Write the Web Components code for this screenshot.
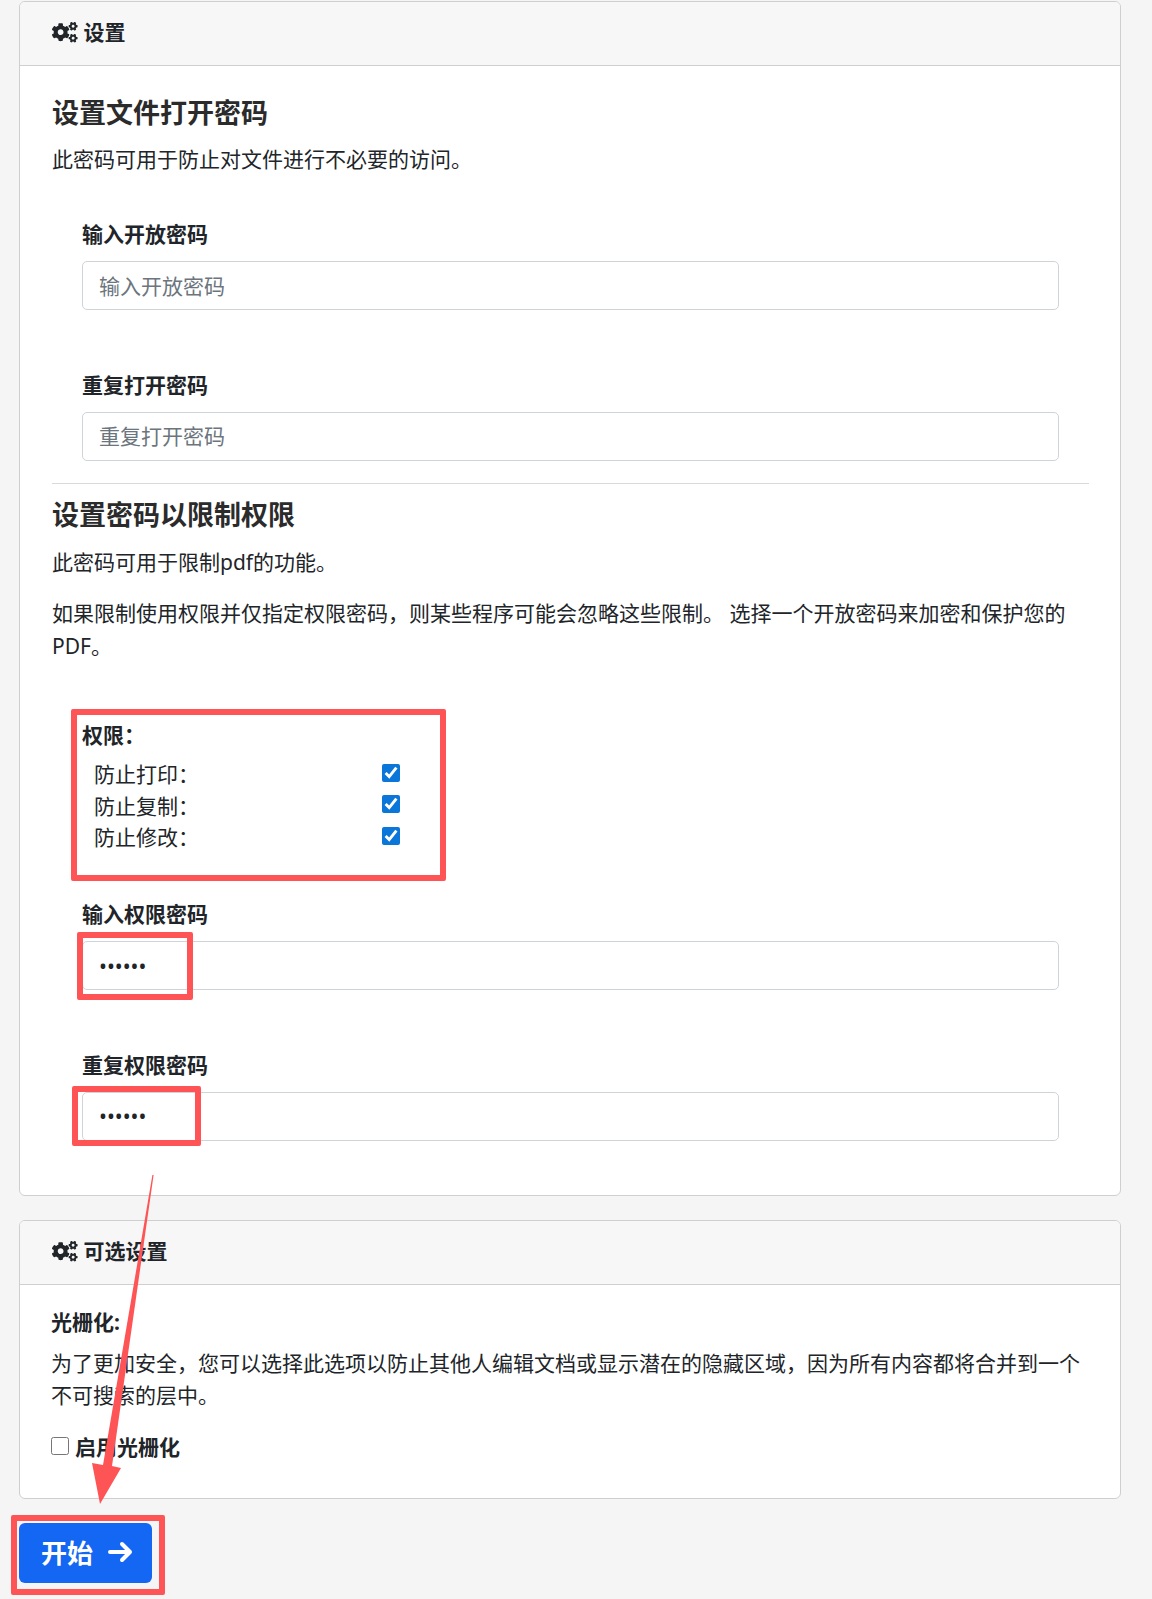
<!DOCTYPE html>
<html lang="zh">
<head>
<meta charset="utf-8">
<title>设置</title>
<style>
html, body { margin: 0; padding: 0; }
body {
    position: relative;
    height: 1599px;
    overflow: hidden;
    background: #f5f5f5;
    color: #212529;
    font-family: "Noto Sans", "Noto Sans CJK SC", sans-serif;
    font-size: 21px;
    line-height: 32.6px;
}
.page { padding: 1px 31px 0 19px; display: flex; flex-direction: column; }
</style>
</head>
<body>
<template id="gears">
    <svg viewBox="0 0 640 512" width="25.6" height="20.48" fill="#212529"><path d="M512.1 191l-8.2 14.3c-3 5.3-9.4 7.5-15.1 5.4-11.8-4.4-22.6-10.7-32.1-18.6-4.6-3.8-5.8-10.5-2.8-15.7l8.2-14.3c-6.9-8-12.3-17.3-15.9-27.4h-16.5c-6 0-11.2-4.3-12.2-10.3-2-12-2.1-24.6 0-37.1 1-6 6.2-10.4 12.2-10.4h16.5c3.6-10.1 9-19.4 15.9-27.4l-8.2-14.3c-3-5.2-1.9-11.9 2.8-15.7 9.5-7.9 20.4-14.2 32.1-18.6 5.7-2.1 12.1.1 15.1 5.4l8.2 14.3c10.5-1.9 21.2-1.9 31.7 0L552 6.3c3-5.3 9.4-7.5 15.1-5.4 11.8 4.4 22.6 10.7 32.1 18.6 4.6 3.8 5.8 10.5 2.8 15.7l-8.2 14.3c6.9 8 12.3 17.3 15.9 27.4h16.5c6 0 11.2 4.3 12.2 10.3 2 12 2.1 24.6 0 37.1-1 6-6.2 10.4-12.2 10.4h-16.5c-3.6 10.1-9 19.4-15.9 27.4l8.2 14.3c3 5.2 1.9 11.9-2.8 15.7-9.5 7.9-20.4 14.2-32.1 18.6-5.7 2.1-12.1-.1-15.1-5.4l-8.2-14.3c-10.4 1.9-21.2 1.9-31.7 0zm-10.5-58.8c38.5 29.6 82.4-14.3 52.8-52.8-38.5-29.7-82.4 14.3-52.8 52.8zM386.3 286.1l33.7 16.8c10.1 5.8 14.5 18.1 10.5 29.1-8.9 24.2-26.4 46.4-42.6 65.8-7.4 8.9-20.2 11.1-30.3 5.3l-29.1-16.8c-16 13.7-34.6 24.6-54.9 31.7v33.6c0 11.6-8.3 21.6-19.7 23.6-24.6 4.2-50.4 4.4-75.9 0-11.5-2-20-11.9-20-23.6V418c-20.3-7.2-38.9-18-54.9-31.7L74 403c-10 5.8-22.9 3.6-30.3-5.3-16.2-19.4-33.3-41.6-42.2-65.7-4-10.9.4-23.2 10.5-29.1l33.3-16.8c-3.9-20.9-3.9-42.4 0-63.4L12 205.8c-10.1-5.8-14.6-18.1-10.5-29 8.9-24.2 26-46.4 42.2-65.8 7.4-8.9 20.2-11.1 30.3-5.3l29.1 16.8c16-13.7 34.6-24.6 54.9-31.7V57.1c0-11.5 8.2-21.5 19.6-23.5 24.6-4.2 50.5-4.4 76-.1 11.5 2 20 11.9 20 23.6v33.6c20.3 7.2 38.9 18 54.9 31.7l29.1-16.8c10-5.8 22.9-3.6 30.3 5.3 16.2 19.4 33.2 41.6 42.1 65.8 4 10.9.1 23.2-10 29.1l-33.7 16.8c3.9 21 3.9 42.5 0 63.5zm-117.6 21.1c59.2-77-28.7-164.9-105.7-105.7-59.2 77 28.7 164.9 105.7 105.7zm243.4 182.7l-8.2 14.3c-3 5.3-9.4 7.5-15.1 5.4-11.8-4.4-22.6-10.7-32.1-18.6-4.6-3.8-5.8-10.5-2.8-15.7l8.2-14.3c-6.9-8-12.3-17.3-15.9-27.4h-16.5c-6 0-11.2-4.3-12.2-10.3-2-12-2.1-24.6 0-37.1 1-6 6.2-10.4 12.2-10.4h16.5c3.6-10.1 9-19.4 15.9-27.4l-8.2-14.3c-3-5.2-1.9-11.9 2.8-15.7 9.5-7.9 20.4-14.2 32.1-18.6 5.7-2.1 12.1.1 15.1 5.4l8.2 14.3c10.5-1.9 21.2-1.9 31.7 0l8.2-14.3c3-5.3 9.4-7.5 15.1-5.4 11.8 4.4 22.6 10.7 32.1 18.6 4.6 3.8 5.8 10.5 2.8 15.7l-8.2 14.3c6.9 8 12.3 17.3 15.9 27.4h16.5c6 0 11.2 4.3 12.2 10.3 2 12 2.1 24.6 0 37.1-1 6-6.2 10.4-12.2 10.4h-16.5c-3.6 10.1-9 19.4-15.9 27.4l8.2 14.3c3 5.2 1.9 11.9-2.8 15.7-9.5 7.9-20.4 14.2-32.1 18.6-5.7 2.1-12.1-.1-15.1-5.4l-8.2-14.3c-10.4 1.9-21.2 1.9-31.7 0zM501.6 431c38.5 29.6 82.4-14.3 52.8-52.8-38.5-29.6-82.4 14.3-52.8 52.8z"/></svg>
</template>

<div class="page">
    <app-card heading="设置" style="height:1195px">
        <app-heading style="margin-top:31px">设置文件打开密码</app-heading>
        <app-text style="margin-top:14px">此密码可用于防止对文件进行不必要的访问。</app-text>
        <pass-field label="输入开放密码" placeholder="输入开放密码" style="margin-top:42px"></pass-field>
        <pass-field label="重复打开密码" placeholder="重复打开密码" style="margin-top:59px;--label-gap:10px"></pass-field>
        <app-rule></app-rule>
        <app-heading style="margin-top:15px">设置密码以限制权限</app-heading>
        <app-text style="margin-top:15px">此密码可用于限制pdf的功能。</app-text>
        <app-text style="margin-top:19px">如果限制使用权限并仅指定权限密码，则某些程序可能会忽略这些限制。 选择一个开放密码来加密和保护您的PDF。</app-text>
        <perm-group label="权限：" style="margin-top:56px">
            <perm-row>防止打印：</perm-row>
            <perm-row>防止复制：</perm-row>
            <perm-row>防止修改：</perm-row>
        </perm-group>
        <pass-field label="输入权限密码" value="123456" style="margin-top:44px"></pass-field>
        <pass-field label="重复权限密码" value="123456" style="margin-top:59px;--label-gap:10px"></pass-field>
    </app-card>

    <app-card heading="可选设置" compact style="height:279px;margin-top:24px">
        <app-text style="margin-top:21px;font-weight:700">光栅化:</app-text>
        <app-text style="margin-top:8px">为了更加安全，您可以选择此选项以防止其他人编辑文档或显示潜在的隐藏区域，因为所有内容都将合并到一个不可搜索的层中。</app-text>
        <check-line style="margin-top:19px">启用光栅化</check-line>
    </app-card>

    <start-button style="margin-top:24px">开始</start-button>
</div>

<mark-box style="left:70.5px;top:709px;width:375.5px;height:172px"></mark-box>
<mark-box style="left:77px;top:932px;width:116px;height:68px"></mark-box>
<mark-box style="left:72px;top:1086px;width:129px;height:60px"></mark-box>
<mark-box style="left:11px;top:1515px;width:154px;height:80px"></mark-box>
<mark-arrow></mark-arrow>

<script>
class AppCard extends HTMLElement {
    constructor() {
        super();
        this.shadowDOM = this.attachShadow({mode: 'open'});
    }

    connectedCallback() {
        const compact = this.hasAttribute('compact');
        this.shadowDOM.innerHTML = `
        <style>
        :host {
            display: flex;
            flex-direction: column;
            box-sizing: border-box;
            background: #fff;
            border: 1px solid #cfcfcf;
            border-radius: 6px;
            overflow: hidden;
        }
        header {
            display: flex;
            align-items: center;
            gap: 6px;
            box-sizing: border-box;
            height: 64px;
            flex: none;
            padding: 0 32px 2px;
            background: #f7f7f7;
            border-bottom: 1px solid #cfcfcf;
            font-weight: 700;
        }
        svg { flex: none; }
        .body { padding: 0 ${compact ? 31 : 32}px; }
        </style>
        <header><span id="icon"></span><span>${this.getAttribute('heading')}</span></header>
        <div class="body"><slot></slot></div>
        `;
        const icon = this.shadowDOM.getElementById('icon');
        icon.style.display = 'flex';
        icon.appendChild(document.getElementById('gears').content.cloneNode(true));
    }
}

class AppHeading extends HTMLElement {
    constructor() {
        super();
        this.attachShadow({mode: 'open'}).innerHTML = `
        <style>
        :host { display: block; font-size: 27px; line-height: 32px; font-weight: 700; color: #2b2b2b; }
        </style>
        <slot></slot>
        `;
    }
}

class AppText extends HTMLElement {
    constructor() {
        super();
        this.attachShadow({mode: 'open'}).innerHTML = `
        <style>
        :host { display: block; }
        </style>
        <slot></slot>
        `;
    }
}

class AppRule extends HTMLElement {
    constructor() {
        super();
        this.attachShadow({mode: 'open'}).innerHTML = `
        <style>
        :host { display: block; height: 1px; margin-top: 22px; margin-right: -1px; background: #d9d9d9; }
        </style>
        `;
    }
}

class PassField extends HTMLElement {
    constructor() {
        super();
        this.attachShadow({mode: 'open'});
    }

    connectedCallback() {
        const value = this.getAttribute('value');
        const placeholder = this.getAttribute('placeholder') || '';
        this.shadowDOM = this.shadowRoot;
        this.shadowDOM.innerHTML = `
        <style>
        :host { display: block; padding-left: 30px; padding-right: 29px; }
        label { display: block; font-weight: 700; margin-bottom: var(--label-gap, 11px); }
        input {
            display: block;
            box-sizing: border-box;
            width: 100%;
            height: 49px;
            padding: 0 16px;
            background: #fff;
            border: 1px solid #ced4da;
            border-radius: 5px;
            color: #212529;
            font: inherit;
            outline: none;
        }
        input::placeholder { color: #6c757d; opacity: 1; }
        </style>
        <label>${this.getAttribute('label')}</label>
        <input type="password" placeholder="${placeholder}">
        `;
        if (value) this.shadowDOM.querySelector('input').value = value;
    }
}

class PermGroup extends HTMLElement {
    constructor() {
        super();
        this.attachShadow({mode: 'open'});
    }

    connectedCallback() {
        this.shadowRoot.innerHTML = `
        <style>
        :host { display: block; padding-left: 30px; }
        .title { font-weight: 700; margin-bottom: 8px; }
        </style>
        <div class="title">${this.getAttribute('label')}</div>
        <slot></slot>
        `;
    }
}

class PermRow extends HTMLElement {
    constructor() {
        super();
        this.attachShadow({mode: 'open'}).innerHTML = `
        <style>
        :host { display: flex; align-items: center; height: 31.5px; padding-left: 12px; }
        .name { width: 288px; margin-top: -1px; }
        input { width: 18px; height: 18px; margin: -4px 0 0; accent-color: #0b76d9; }
        </style>
        <span class="name"><slot></slot></span>
        <input type="checkbox" checked>
        `;
    }
}

class CheckLine extends HTMLElement {
    constructor() {
        super();
        this.attachShadow({mode: 'open'}).innerHTML = `
        <style>
        :host { display: flex; align-items: center; gap: 6px; font-weight: 700; }
        input { width: 18px; height: 18px; margin: -2px 0 0; }
        </style>
        <input type="checkbox">
        <span><slot></slot></span>
        `;
    }
}

class StartButton extends HTMLElement {
    constructor() {
        super();
        this.attachShadow({mode: 'open'}).innerHTML = `
        <style>
        :host { display: block; align-self: flex-start; }
        button {
            display: flex;
            align-items: center;
            gap: 15px;
            box-sizing: border-box;
            width: 133px;
            height: 60px;
            padding: 0 0 2px 22px;
            border: 0;
            border-radius: 6px;
            background: #1367f3;
            color: #fff;
            font-family: inherit;
            font-size: 26px;
            font-weight: 700;
        }
        svg { margin-top: -1px; }
        </style>
        <button><slot></slot>
            <svg width="25" height="22" viewBox="0 0 25 22" fill="none" stroke="#fff" stroke-width="4" stroke-linecap="round" stroke-linejoin="round"><path d="M2 11h20M14 3l8 8-8 8"/></svg>
        </button>
        `;
    }
}

class MarkBox extends HTMLElement {
    constructor() {
        super();
        this.attachShadow({mode: 'open'}).innerHTML = `
        <style>
        :host {
            position: absolute;
            box-sizing: border-box;
            border: 6px solid #fe5455;
            border-radius: 2px;
            pointer-events: none;
        }
        </style>
        `;
    }
}

class MarkArrow extends HTMLElement {
    constructor() {
        super();
        this.attachShadow({mode: 'open'}).innerHTML = `
        <style>
        :host { position: absolute; left: 0; top: 0; pointer-events: none; }
        svg { display: block; }
        </style>
        <svg width="1152" height="1599" viewBox="0 0 1152 1599">
            <polygon fill="#fe5455" points="100,1504 121,1468 112,1466 153.6,1175 152.4,1175 103,1465 92,1463"/>
        </svg>
        `;
    }
}

customElements.define('app-card', AppCard);
customElements.define('app-heading', AppHeading);
customElements.define('app-text', AppText);
customElements.define('app-rule', AppRule);
customElements.define('pass-field', PassField);
customElements.define('perm-group', PermGroup);
customElements.define('perm-row', PermRow);
customElements.define('check-line', CheckLine);
customElements.define('start-button', StartButton);
customElements.define('mark-box', MarkBox);
customElements.define('mark-arrow', MarkArrow);
</script>
</body>
</html>
